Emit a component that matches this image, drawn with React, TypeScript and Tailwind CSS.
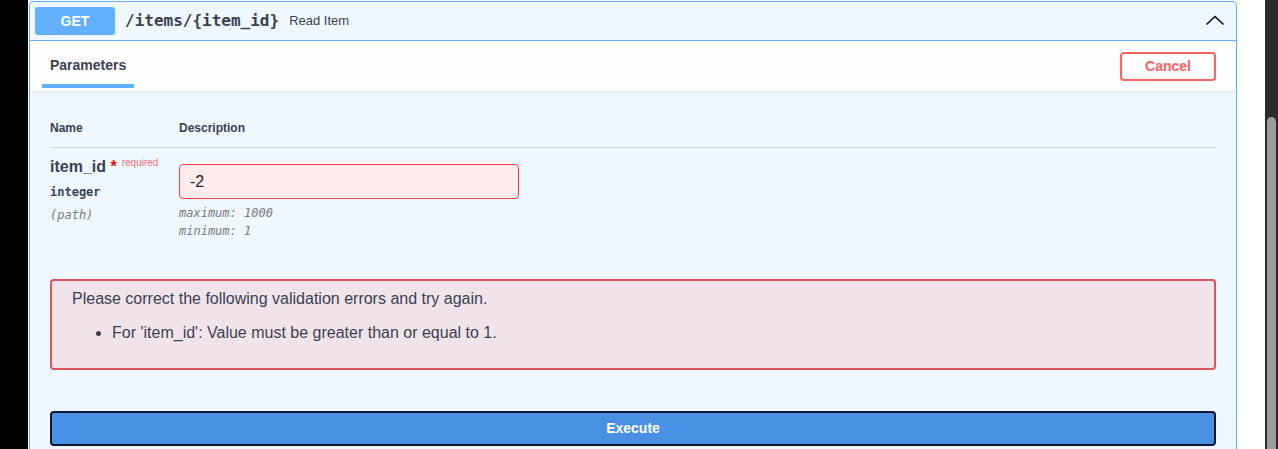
import React from "react";

const sans = { fontFamily: '"Liberation Sans", Arial, sans-serif' };
const mono = { fontFamily: '"DejaVu Sans Mono", "Liberation Mono", monospace' };

function ChevronUp() {
  return (
    <svg width="18" height="10" viewBox="0 0 18 10" className="mr-[7px] mb-[3px] shrink-0">
      <polyline points="1,9 9,1.5 17,9" fill="none" stroke="#111" strokeWidth="1.7" strokeLinecap="round" strokeLinejoin="round" />
    </svg>
  );
}

function Summary() {
  return (
    <div className="flex items-center p-[5px] border-b border-[#61affe]">
      <div className="w-[80px] h-[28px] rounded-[3px] bg-[#61affe] text-white font-bold text-[14px] flex items-center justify-center">
        GET
      </div>
      <span className="px-[10px] text-[16px] font-bold text-[#3b4151] leading-[20px]" style={mono}>
        /items/&#123;item_id&#125;
      </span>
      <span className="text-[13px] text-[#3b4151]">Read Item</span>
      <div className="flex-1" />
      <ChevronUp />
    </div>
  );
}

function SectionHeader() {
  return (
    <div className="h-[50px] px-[20px] flex items-stretch justify-between bg-[#fcfeff] shadow-[0_1px_2px_rgba(0,0,0,0.1)]">
      <div className="flex flex-col pt-[16px]">
        <h4 className="text-[14px] leading-[16px] font-bold text-[#3b4151]">Parameters</h4>
        <div className="mt-[11px] -mx-[8px] h-[4px] bg-[#61affe]" />
      </div>
      <button className="self-center w-[96px] h-[29px] border-2 border-[#ff6060] rounded-[4px] text-[#ff6060] font-bold text-[14px] bg-transparent">
        Cancel
      </button>
    </div>
  );
}

function ParamTable() {
  return (
    <div className="px-[20px] pt-[18px]">
      <div className="flex py-[12px] border-b border-[#3b4151]/20 text-[12px] leading-[14px] font-bold text-[#3b4151]">
        <div className="w-[129px]">Name</div>
        <div>Description</div>
      </div>
      <div className="flex">
        <div className="w-[129px] pt-[10px] flex flex-col">
          <div className="text-[16px] leading-[18px] font-bold text-[#3b4151] whitespace-nowrap">
            item_id<span className="text-[#e01010]">&nbsp;*</span>
            <span className="relative -top-[6px] pl-[5px] text-[10px] font-normal text-[#ff0000]/60">required</span>
          </div>
          <div className="mt-[7px] text-[12px] leading-[14px] font-bold text-[#3b4151]" style={mono}>
            integer
          </div>
          <div className="mt-[9px] text-[12px] leading-[14px] italic text-[#7a7a7a]" style={mono}>
            (path)
          </div>
        </div>
        <div className="pt-[16px] flex flex-col">
          <div className="w-[340px] h-[35px] border border-[#f93e3e] bg-[#feebeb] rounded-[4px] px-[10px] flex items-center text-[16px] text-[#222]">
            -2
          </div>
          <div className="mt-[5px] text-[12px] leading-[18px] italic text-[#7a7a7a]" style={mono}>
            <div>maximum: 1000</div>
            <div>minimum: 1</div>
          </div>
        </div>
      </div>
    </div>
  );
}

function ValidationErrors() {
  return (
    <div className="mx-[20px] mt-[39px] border-2 border-[#e0525a] rounded-[4px] bg-[#f0e4ea] px-[20px] pt-[9px] pb-[26px] text-[#3b4151]">
      <h4 className="text-[16px] leading-[18px]">Please correct the following validation errors and try again.</h4>
      <ul className="mt-[16px] list-disc pl-[40px] text-[16px] leading-[18px]">
        <li>For 'item_id': Value must be greater than or equal to 1.</li>
      </ul>
    </div>
  );
}

export default function App() {
  return (
    <div className="flex w-[1278px] h-[449px] overflow-hidden bg-white" style={sans}>
      <div className="w-[28px] shrink-0 bg-black" />
      <div className="flex-1 pl-[1px] pt-[1px] pr-[28px] flex">
        <div className="w-[1208px] h-[460px] border border-[#61affe] rounded-t-[4px] bg-[#eff7ff]">
          <Summary />
          <SectionHeader />
          <ParamTable />
          <ValidationErrors />
          <div className="mx-[20px] mt-[41px]">
            <button className="w-full h-[35px] border-2 border-[#0b1733] rounded-[4px] bg-[#4990e2] text-white font-bold text-[14px]">
              Execute
            </button>
          </div>
        </div>
      </div>
      <div className="w-[13px] shrink-0 bg-[#2b2b2b] flex flex-col items-center pt-[117px]">
        <div className="w-[9px] flex-1 rounded-t-full bg-[#9c9c9c]" />
      </div>
    </div>
  );
}
